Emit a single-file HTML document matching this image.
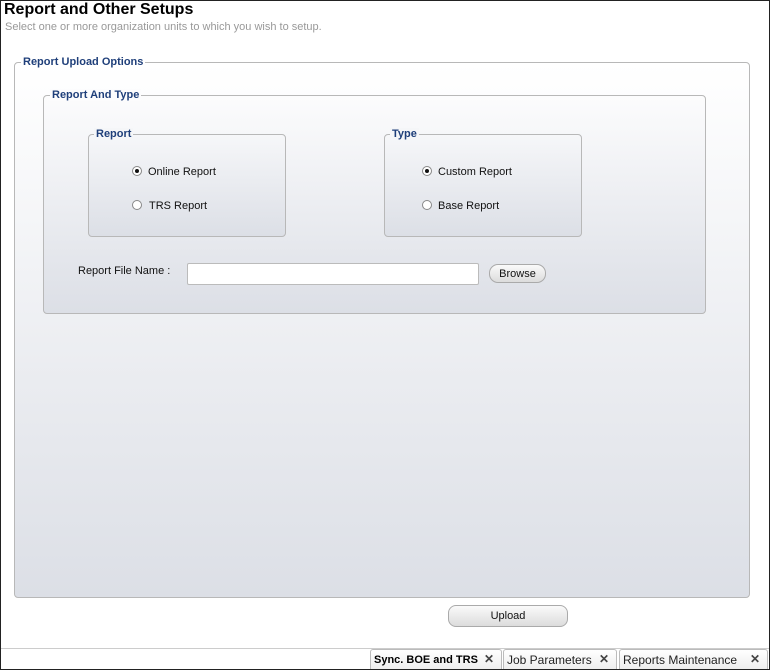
<!DOCTYPE html>
<html><head><style>
*{margin:0;padding:0;box-sizing:border-box}
body{width:770px;height:670px;background:#fff;font-family:"Liberation Sans",Arial,sans-serif;position:relative;overflow:hidden}
.frame{position:absolute;left:0;top:0;width:770px;height:670px;border:1px solid #222;}
.a{position:absolute}
h1{position:absolute;left:4px;top:1px;font-size:16px;font-weight:bold;color:#000}
.sub{left:5px;top:21px;font-size:11px;color:#999}
.fs{position:absolute;border:1px solid #b8b8b8;border-radius:4px}
.lg{position:absolute;top:-8px;background:transparent;font-size:11px;font-weight:bold;color:#1f3f7a;padding:0 2px}
.t{font-size:11px;color:#111}
.r{position:absolute;width:10px;height:10px;border-radius:50%;border:1px solid #888;background:#fff}
.r.on:after{content:"";position:absolute;left:2px;top:2px;width:4px;height:4px;border-radius:50%;background:#111}
.btn{position:absolute;border:1px solid #aaa;background:linear-gradient(#fafafa,#dcdcdc);font-size:11px;text-align:center;color:#111}
.tab{position:absolute;top:649px;height:20px;border:1px solid #bbb;border-bottom:none;border-radius:3px 3px 0 0;background:linear-gradient(#fff,#eee);font-family:"Liberation Sans",sans-serif;font-size:12px;padding:3px 3px;color:#222}
.x{position:absolute;right:7px;top:2px;font-weight:bold;color:#444;font-size:12px}
</style></head><body>
<div class="frame"></div>
<h1>Report and Other Setups</h1>
<div class="a sub">Select one or more organization units to which you wish to setup.</div>
<div class="fs" style="left:14px;top:62px;width:736px;height:536px;background:linear-gradient(#fff,#dcdfe6)">
 <div class="lg" style="left:6px;top:-7px;background:#fff">Report Upload Options</div>
</div>
<div class="fs" style="left:43px;top:95px;width:663px;height:219px;background:linear-gradient(#fcfcfd,#dcdfe6)">
 <div class="lg" style="left:6px;top:-7px;background:#fcfcfd">Report And Type</div>
</div>
<div class="fs" style="left:88px;top:134px;width:198px;height:103px;background:linear-gradient(#f6f7f9,#dcdfe6)">
 <div class="lg" style="left:5px;top:-7px;background:#f5f6f8">Report</div>
</div>
<div class="fs" style="left:384px;top:134px;width:198px;height:103px;background:linear-gradient(#f6f7f9,#dcdfe6)">
 <div class="lg" style="left:5px;top:-7px;background:#f5f6f8">Type</div>
</div>
<div class="r on" style="left:132px;top:166px"></div><div class="a t" style="left:148px;top:166px">Online Report</div>
<div class="r" style="left:132px;top:200px"></div><div class="a t" style="left:149px;top:200px">TRS Report</div>
<div class="r on" style="left:422px;top:166px"></div><div class="a t" style="left:438px;top:166px">Custom Report</div>
<div class="r" style="left:422px;top:200px"></div><div class="a t" style="left:438px;top:200px">Base Report</div>
<div class="a t" style="left:78px;top:265px">Report File Name :</div>
<div class="a" style="left:187px;top:263px;width:292px;height:22px;background:#fff;border:1px solid #bbb;border-radius:2px"></div>
<div class="btn" style="left:489px;top:264px;width:57px;height:19px;border-radius:9px;line-height:18px">Browse</div>
<div class="btn" style="left:448px;top:605px;width:120px;height:22px;border-radius:8px;line-height:21px">Upload</div>
<div class="a" style="left:1px;top:648px;width:768px;height:1px;background:#ccc"></div>
<div class="tab" style="left:370px;width:132px;font-weight:bold;font-size:11px;padding-top:4px;color:#000">Sync. BOE and TRS<span class="x" style="top:2px">✕</span></div>
<div class="tab" style="left:503px;width:114px">Job Parameters<span class="x">✕</span></div>
<div class="tab" style="left:619px;width:149px">Reports Maintenance<span class="x">✕</span></div>
</body></html>
